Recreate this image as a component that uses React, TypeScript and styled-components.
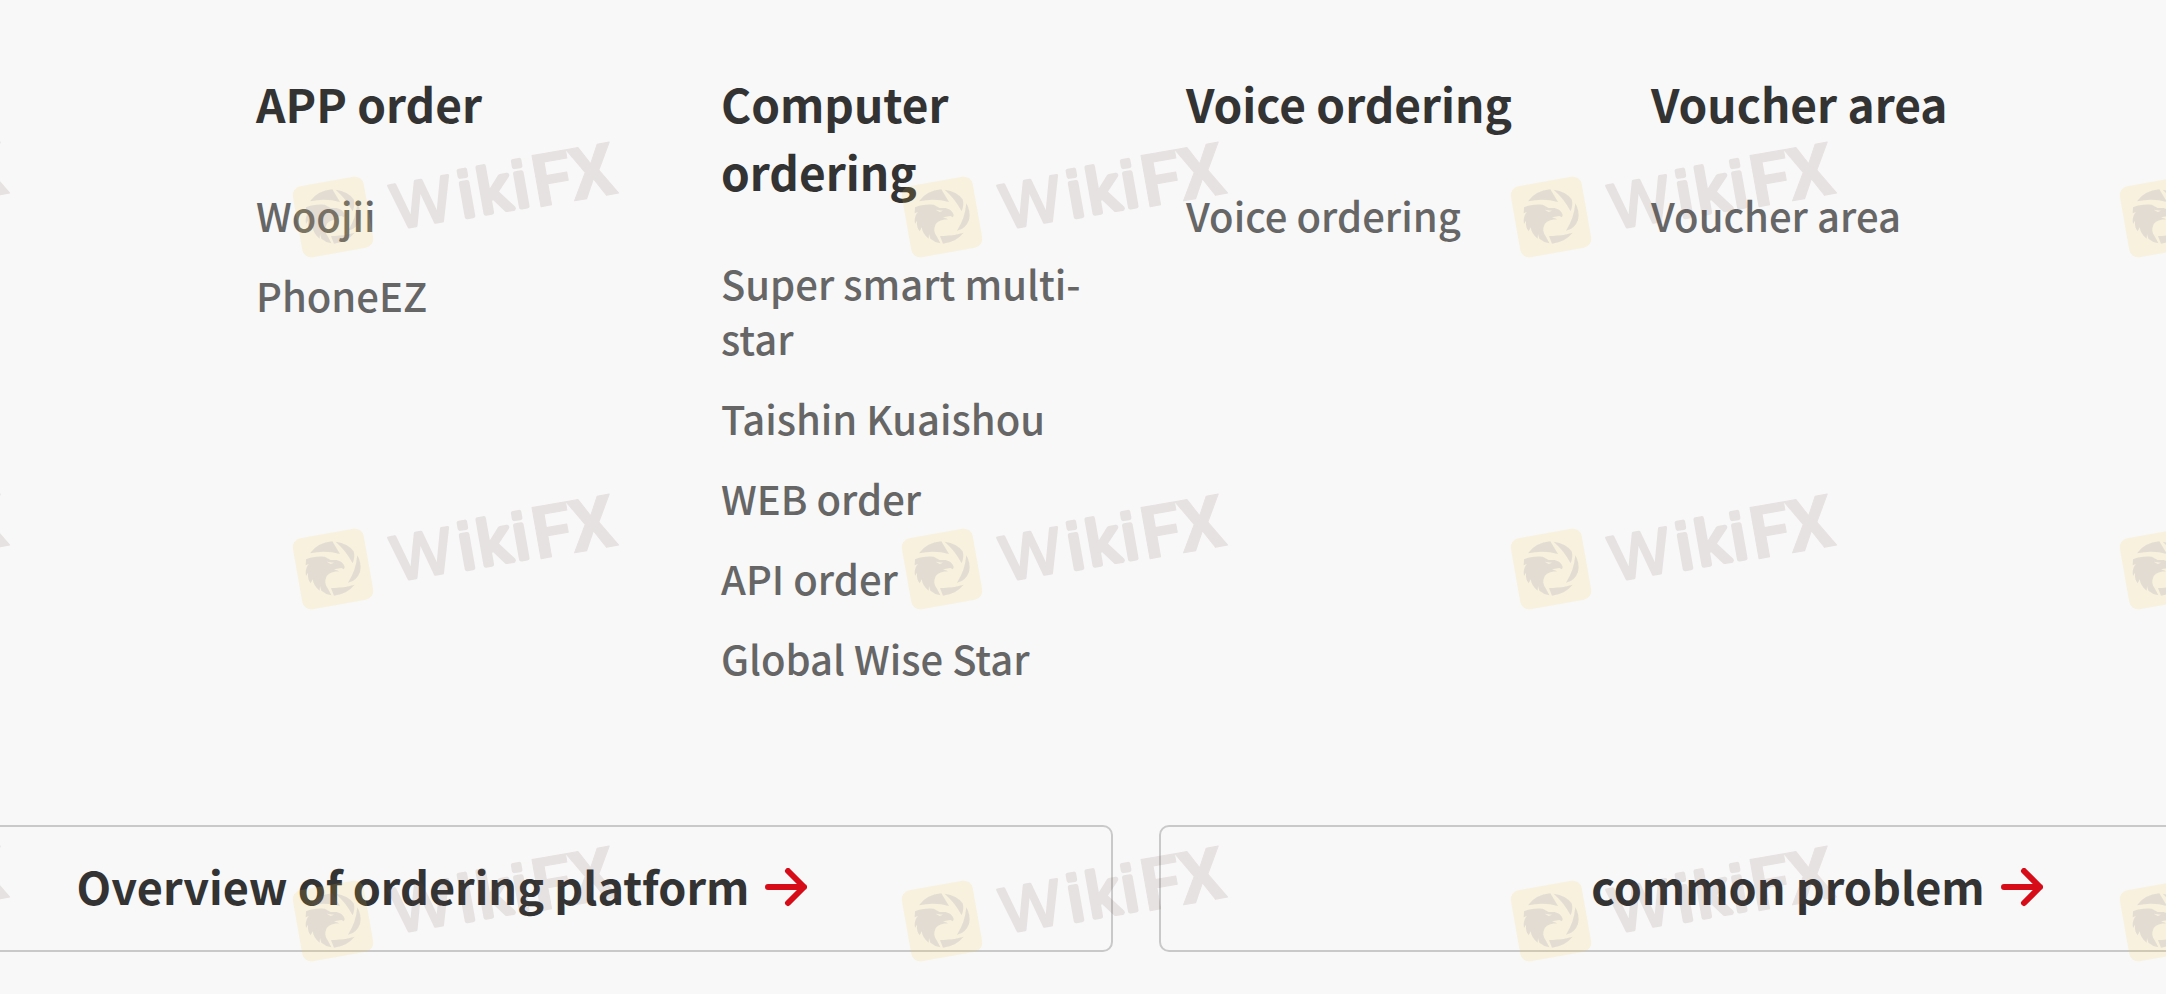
import React from "react";
import styled, { createGlobalStyle } from "styled-components";

const GlobalStyle = createGlobalStyle`
  *, *::before, *::after { box-sizing: border-box; }
  body {
    margin: 0;
    background: #f8f8f8;
    font-family: "Noto Sans CJK TC", "Noto Sans", sans-serif;
    color: #333;
  }
`;

const Page = styled.main`
  position: relative;
  min-height: 100vh;
  overflow: hidden;
`;

const Columns = styled.nav`
  display: grid;
  grid-template-columns: repeat(4, 1fr);
  padding: 69px 50px 0 256px;
`;

const Column = styled.section`
  padding-right: 80px;
`;

const Heading = styled.h2`
  margin: 0 0 51px;
  font-size: 46px;
  line-height: 68px;
  font-weight: 700;
`;

const LinkList = styled.ul`
  display: flex;
  flex-direction: column;
  gap: 25px;
  margin: 0;
  padding: 0;
  list-style: none;
`;

const ColumnLink = styled.a`
  display: block;
  color: #666;
  font-size: 40px;
  line-height: 55px;
  font-weight: 500;
  text-decoration: none;
`;

const Actions = styled.div`
  display: grid;
  grid-template-columns: 1fr 1fr;
  gap: 46px;
  margin: 139px -322px 42px -216px;
`;

const ActionLink = styled.a`
  display: flex;
  align-items: center;
  justify-content: center;
  gap: 16px;
  height: 127px;
  padding-right: 13px;
  border: 2px solid #c9c9c9;
  border-radius: 10px;
  color: #333;
  font-size: 45px;
  line-height: 68px;
  font-weight: 700;
  text-decoration: none;
`;

const ActionLabel = styled.span`
  padding-bottom: 6px;
`;

const ArrowIcon = styled.svg`
  flex: none;
  width: 42px;
  height: 42px;
`;

const WatermarkLayer = styled.svg`
  position: absolute;
  inset: 0;
  width: 100%;
  height: 100%;
  pointer-events: none;
`;

const Arrow = () => (
  <ArrowIcon viewBox="0 0 42 42" fill="none" stroke="#d70c19" strokeWidth="6" strokeLinecap="round" strokeLinejoin="round" aria-hidden="true">
    <path d="M3 19H39M23 3L39 19L23 35" />
  </ArrowIcon>
);

const Watermark = () => (
  <WatermarkLayer aria-hidden="true">
    <defs>
      <pattern id="mark" x="283" y="101" width="609" height="352" patternUnits="userSpaceOnUse">
        <g transform="translate(50 116)">
          <g transform="rotate(-10)">
            <rect x="-36" y="-36" width="72" height="72" rx="9" fill="#f0c83c" fillOpacity="0.14" />
            <g fontFamily="Liberation Sans, sans-serif" fill="#724646" stroke="#724646" strokeLinejoin="round" opacity="0.13">
              <text x="60 128 147 183" y="23" fontSize="64" strokeWidth="5">
                <tspan strokeWidth="3">W</tspan>iki
              </text>
              <text x="202 240" y="26" fontFamily="Roboto, sans-serif" fontSize="73" fontWeight="700" strokeWidth="1">FX</text>
            </g>
          </g>
          <g transform="scale(0.333) translate(-157 -175)" fill="#6e5a96" fillOpacity="0.14">
            <path d="M88 128Q110 96 155 92L178 130Q135 118 88 128Z" />
            <path d="M165 93Q202 98 219 122Q224 138 216 158Q196 120 165 93Z" />
            <path d="M230 134Q244 158 238 184Q228 212 202 216Q226 180 230 134Z" />
            <path d="M151 232Q186 234 222 222Q200 250 160 255Z" />
            <path d="M76 146Q98 136 132 138L150 148L168 148Q186 152 192 168L190 176L182 172L160 176L176 182Q150 182 138 196Q128 218 142 234L152 254Q134 250 122 240L118 226L117 240Q98 226 96 206L90 218Q80 206 82 186L76 196Q72 176 84 160L75 164ZM138 153L150 160L160 156Z" fillRule="evenodd" />
          </g>
        </g>
      </pattern>
    </defs>
    <rect width="100%" height="100%" fill="url(#mark)" />
  </WatermarkLayer>
);

const columns = [
  { title: "APP order", links: ["Woojii", "PhoneEZ"] },
  {
    title: "Computer ordering",
    links: ["Super smart multi-star", "Taishin Kuaishou", "WEB order", "API order", "Global Wise Star"],
  },
  { title: "Voice ordering", links: ["Voice ordering"] },
  { title: "Voucher area", links: ["Voucher area"] },
];

const actions = ["Overview of ordering platform", "common problem"];

export default function App() {
  return (
    <>
      <GlobalStyle />
      <Page>
        <Columns aria-label="Ordering">
          {columns.map((column) => (
            <Column key={column.title}>
              <Heading>{column.title}</Heading>
              <LinkList>
                {column.links.map((link) => (
                  <li key={link}>
                    <ColumnLink href="#">{link}</ColumnLink>
                  </li>
                ))}
              </LinkList>
            </Column>
          ))}
        </Columns>
        <Actions>
          {actions.map((label) => (
            <ActionLink href="#" key={label}>
              <ActionLabel>{label}</ActionLabel>
              <Arrow />
            </ActionLink>
          ))}
        </Actions>
        <Watermark />
      </Page>
    </>
  );
}
